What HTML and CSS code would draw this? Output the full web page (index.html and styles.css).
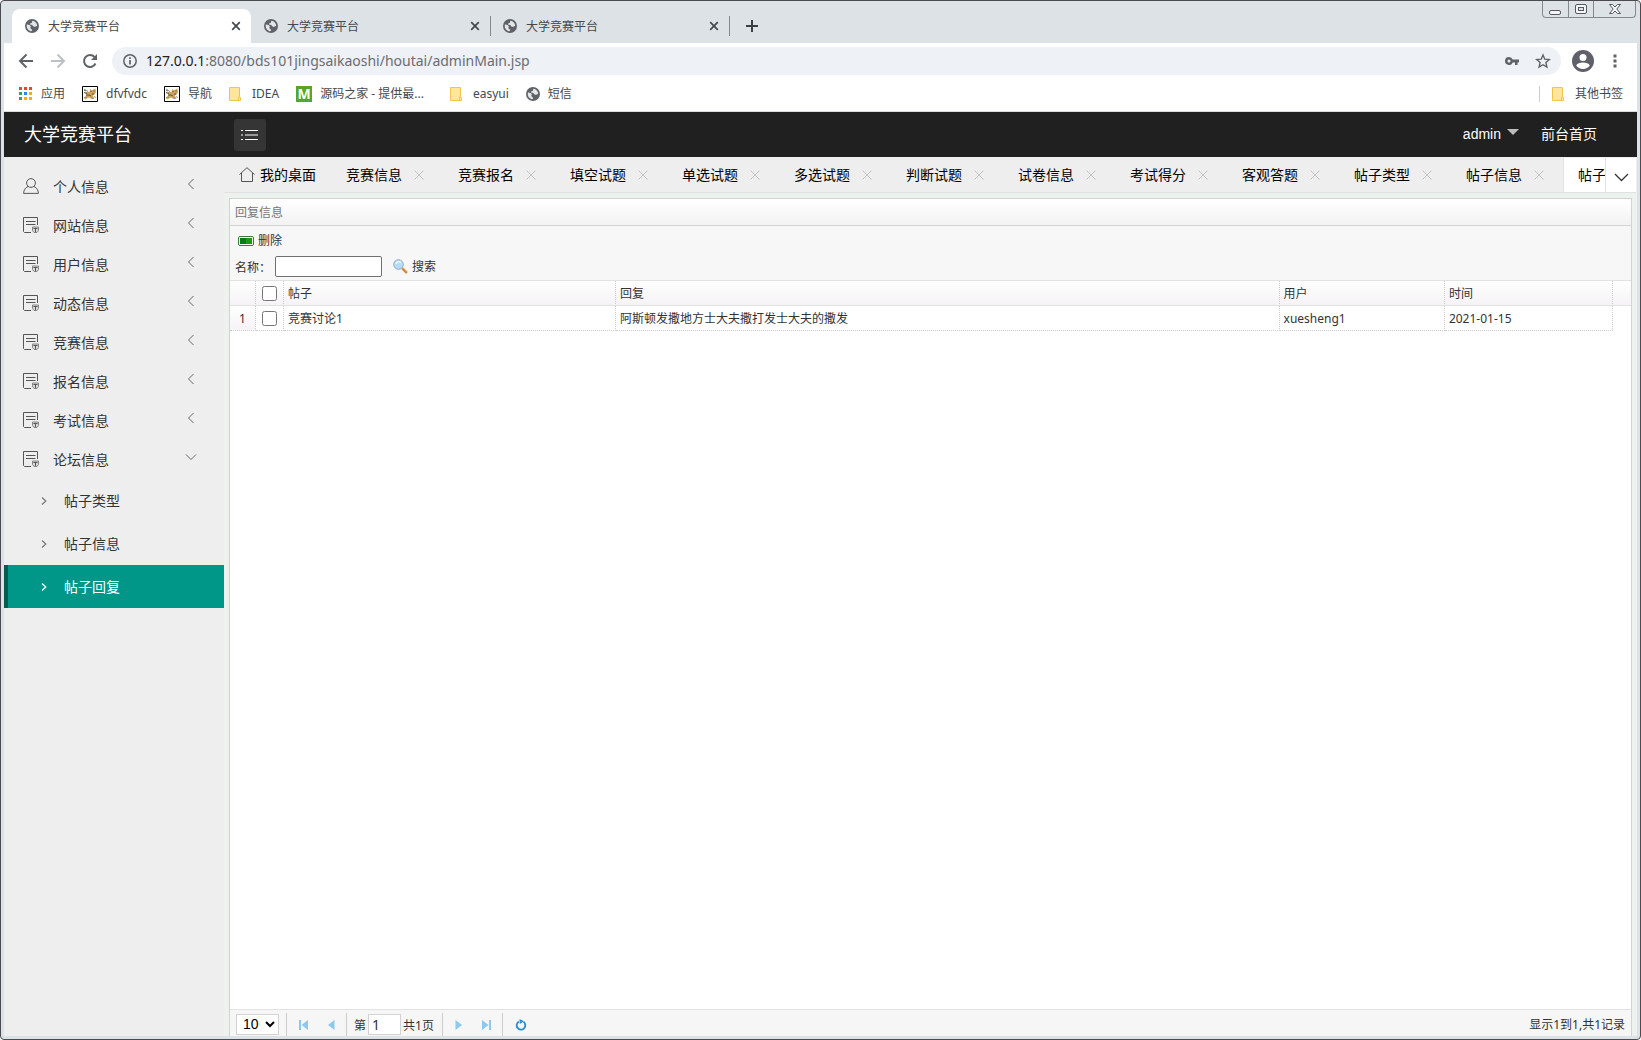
FILE: index.html
```html
<!DOCTYPE html>
<html lang="zh-CN">
<head>
<meta charset="utf-8">
<title>大学竞赛平台</title>
<link rel="stylesheet" href="styles.css">
</head>
<body>
<svg class="sprite" aria-hidden="true">
  <symbol id="globe" viewBox="0 0 14 14"><circle cx="7" cy="7" r="7" fill="#5f6368"/><path d="M2 5.200C3.500 6 5 5.800 5.600 7c.4 1-.6 1.400 0 2.400.5.900 1.600.6 1.500 1.800-.1.800-.8.900-1.500 1C3.300 11.300 1.700 9.500 1.700 7zM7.300 1.700c-.6.900.3 1.300-.4 2-.6.700-1.800.4-1.900 1.300 0 .9 1.300.6 2.100.9 1 .4 1 1.600 2 1.900 1.200.3 1.500-.7 3.100-.8-.1-2.800-2-4.900-4.900-5.300z" fill="#e4e7ea"/></symbol>
  <symbol id="cross" viewBox="0 0 10 10"><path d="M1.200 1.200l7.600 7.600M8.800 1.200l-7.600 7.600" fill="none" stroke="currentColor" stroke-width="1.700"/></symbol>
  <symbol id="thin-cross" viewBox="0 0 10 10"><path d="M.5.500l9 9M9.500.500l-9 9" fill="none" stroke="currentColor"/></symbol>
  <symbol id="folder" viewBox="0 0 12 14"><path d="M.5.500h10v9l1 1v3H.5z" fill="#ffe69a" stroke="#efc64a"/><path d="M9.500 13.500v-3.500h1.500" fill="none" stroke="#efc64a"/></symbol>
  <symbol id="cat" viewBox="0 0 16 16"><path d="M.5.500h15v15H.5z" fill="#fff" stroke="#000"/><path d="M8 3l2 1.200L13.500 2.500 14 6l-1.200 2.500-2 1 1.700 3.500h-3L7 11.500 3 13.500 2 12l2.500-3L3 7l2-1.500 2.500.5z" fill="#cfa35a"/><path d="M2 4l2 1M2 6.500l3 1M4 9h3l2 1M8.500 5.500h1M11.500 5h1M10 8h2" fill="none" stroke="#5b5346"/><path d="M2 3l4 2.500M2 11.500h3M12 10.500l2 1M9 11l2 2" fill="none" stroke="#8f9a94"/></symbol>
  <symbol id="left" viewBox="0 0 8 12"><path d="M6.500 1L1.500 6l5 5" fill="none" stroke="currentColor"/></symbol>
  <symbol id="down" viewBox="0 0 12 8"><path d="M1 1.500l5 5 5-5" fill="none" stroke="currentColor"/></symbol>
  <symbol id="right" viewBox="0 0 6 8"><path d="M1 .5L4.800 4 1 7.500" fill="none" stroke="currentColor" stroke-width="1.200"/></symbol>
  <symbol id="book" viewBox="0 0 16 16"><path d="M8 15.500H1.500L.5 14.500V.500H14.500V8M3 4.500H12.500M3 7.500H12.500" fill="none" stroke="#555"/><path d="M9.500 10h6v3.500L14 15.500h-3L9.500 13.500z" fill="#d8d8d8" stroke="#858585"/><path d="M10.500 11.500h4M12.500 11v4" stroke="#555"/></symbol>
  <symbol id="user" viewBox="0 0 16 16"><circle cx="8" cy="5" r="4.400" fill="none" stroke="#555"/><path d="M5 8.500C2 10 .8 12 .6 15.400h14.800C15.200 12 14 10 11 8.500" fill="none" stroke="#555"/></symbol>
</svg>

<div class="window">
  <div class="tabstrip">
    <div class="btab active"><svg class="i14"><use href="#globe"/></svg><span>大学竞赛平台</span><button aria-label="关闭标签"><svg class="i10"><use href="#cross"/></svg></button></div>
    <div class="btab"><svg class="i14"><use href="#globe"/></svg><span>大学竞赛平台</span><button aria-label="关闭标签"><svg class="i10"><use href="#cross"/></svg></button></div>
    <div class="btab"><svg class="i14"><use href="#globe"/></svg><span>大学竞赛平台</span><button aria-label="关闭标签"><svg class="i10"><use href="#cross"/></svg></button></div>
    <button class="newtab" aria-label="新标签"><svg width="12" height="12" viewBox="0 0 12 12"><path d="M6 0v12M0 6h12" stroke="#3c4043" stroke-width="2"/></svg></button>
    <div class="winbtns">
      <button aria-label="最小化"><svg width="13" height="13" viewBox="0 0 13 13"><rect x=".5" y="7.500" width="11" height="4" rx="1.500" fill="#f4f5f6" stroke="#55585e"/></svg></button>
      <button aria-label="最大化"><svg width="13" height="11" viewBox="0 0 13 11"><rect x=".5" y=".5" width="11" height="9" rx="1.500" fill="#f4f5f6" stroke="#55585e"/><rect x="3.500" y="3.500" width="5" height="3" fill="#dee1e6" stroke="#55585e"/></svg></button>
      <button class="wide" aria-label="关闭"><svg width="12" height="10" viewBox="0 0 12 10"><path d="M.5.500H3.500L6 3 8.500.500h3L7.800 5l3.700 4.500h-3L6 7 3.500 9.500H.5L4.200 5z" fill="#f4f5f6" stroke="#55585e"/></svg></button>
    </div>
  </div>

  <div class="toolbar">
    <button aria-label="后退"><svg width="16" height="16" viewBox="0 0 16 16"><path d="M15 8H2M8.500 1.500L2 8l6.500 6.500" fill="none" stroke="#5f6368" stroke-width="2"/></svg></button>
    <button aria-label="前进"><svg width="16" height="16" viewBox="0 0 16 16"><path d="M1 8h13M7.500 1.500L14 8l-6.500 6.500" fill="none" stroke="#bdc1c6" stroke-width="2"/></svg></button>
    <button aria-label="重新加载"><svg width="16" height="16" viewBox="0 0 16 16"><path d="M13.500 10.500A6 6 0 1 1 12.500 4" fill="none" stroke="#5f6368" stroke-width="2"/><path d="M15 1v6H9z" fill="#5f6368"/></svg></button>
    <div class="address">
      <svg width="14" height="14" viewBox="0 0 14 14"><circle cx="7" cy="7" r="6.200" fill="none" stroke="#5f6368" stroke-width="1.500"/><path d="M7 6v4.500M7 3.300v1.600" stroke="#5f6368" stroke-width="1.700"/></svg>
      <p class="url"><b>127.0.0.1</b>:8080/bds101jingsaikaoshi/houtai/adminMain.jsp</p>
      <button aria-label="密码"><svg width="14" height="8" viewBox="0 0 14 8"><path fill-rule="evenodd" d="M4 0a4 4 0 0 1 3.700 2.500H14v3h-1.500V8H10V5.500H7.700A4 4 0 1 1 4 0zm0 2.500a1.500 1.500 0 1 0 0 3 1.500 1.500 0 0 0 0-3z" fill="#5f6368"/></svg></button>
      <button aria-label="收藏"><svg width="16" height="16" viewBox="0 0 16 16"><path d="M8 2l1.800 4.200 4.500.4-3.400 3 1 4.400L8 11.700 4.100 14l1-4.400-3.400-3 4.500-.4z" fill="none" stroke="#5f6368" stroke-width="1.400"/></svg></button>
    </div>
    <button aria-label="用户"><svg width="22" height="22" viewBox="0 0 22 22"><circle cx="11" cy="11" r="11" fill="#5f6069"/><circle cx="11" cy="7.500" r="3.500" fill="#fff"/><path d="M4.200 15.500c1-2.200 4-3 6.800-3s5.800.8 6.800 3c-1.500 2.200-4 3.500-6.800 3.500s-5.300-1.300-6.800-3.500z" fill="#fff"/></svg></button>
    <button class="kebab" aria-label="菜单"><svg width="4" height="14" viewBox="0 0 4 14"><path d="M.5.500h3v3h-3zM.5 5.500h3v3h-3zM.5 10.500h3v3h-3z" fill="#5f6368"/></svg></button>
  </div>

  <nav class="bookmarks">
    <a href="#"><svg width="14" height="14" viewBox="0 0 14 14"><path d="M0 0h3v3H0zM5 0h3v3H5zM10 0h3v3h-3z" fill="#ea4335"/><path d="M0 5h3v3H0zM0 10h3v3H0z" fill="#34a060"/><path d="M5 5h3v3H5z" fill="#2986f5"/><path d="M10 5h3v3h-3zM5 10h3v3H5zM10 10h3v3h-3z" fill="#f6ad0c"/></svg>应用</a>
    <a href="#"><svg class="i16"><use href="#cat"/></svg>dfvfvdc</a>
    <a href="#"><svg class="i16"><use href="#cat"/></svg>导航</a>
    <a href="#" class="dir"><svg class="fold"><use href="#folder"/></svg>IDEA</a>
    <a href="#"><i class="m">M</i>源码之家 - 提供最...</a>
    <a href="#" class="dir far"><svg class="fold"><use href="#folder"/></svg>easyui</a>
    <a href="#"><svg class="i14"><use href="#globe"/></svg>短信</a>
    <a href="#" class="dir other"><svg class="fold"><use href="#folder"/></svg>其他书签</a>
  </nav>

  <header class="header">
    <h1>大学竞赛平台</h1>
    <button class="burger" aria-label="折叠菜单"><svg width="18" height="12" viewBox="0 0 18 12"><path d="M4 1.500h13M4 6h13M4 10.500h13M0 1.500h2M0 6h2M0 10.500h2" stroke="#fff"/></svg></button>
    <a href="#" class="admin">admin <svg width="12" height="6" viewBox="0 0 12 6"><path d="M0 0h12L6 6z" fill="#bcbcbc"/></svg></a>
    <a href="#" class="front">前台首页</a>
  </header>

  <div class="app">
    <aside class="side">
      <a href="#" class="item"><svg class="i16"><use href="#user"/></svg>个人信息<svg class="chev"><use href="#left"/></svg></a>
      <a href="#" class="item"><svg class="i16"><use href="#book"/></svg>网站信息<svg class="chev"><use href="#left"/></svg></a>
      <a href="#" class="item"><svg class="i16"><use href="#book"/></svg>用户信息<svg class="chev"><use href="#left"/></svg></a>
      <a href="#" class="item"><svg class="i16"><use href="#book"/></svg>动态信息<svg class="chev"><use href="#left"/></svg></a>
      <a href="#" class="item"><svg class="i16"><use href="#book"/></svg>竞赛信息<svg class="chev"><use href="#left"/></svg></a>
      <a href="#" class="item"><svg class="i16"><use href="#book"/></svg>报名信息<svg class="chev"><use href="#left"/></svg></a>
      <a href="#" class="item"><svg class="i16"><use href="#book"/></svg>考试信息<svg class="chev"><use href="#left"/></svg></a>
      <a href="#" class="item"><svg class="i16"><use href="#book"/></svg>论坛信息<svg class="chev"><use href="#down"/></svg></a>
      <a href="#" class="sub"><svg><use href="#right"/></svg>帖子类型</a>
      <a href="#" class="sub"><svg><use href="#right"/></svg>帖子信息</a>
      <a href="#" class="sub current"><svg><use href="#right"/></svg>帖子回复</a>
    </aside>

    <main class="main">
      <div class="tabs">
        <div class="tablist">
          <a href="#" class="tab home"><svg width="16" height="15" viewBox="0 0 16 15"><path d="M.5 7.500L8 .7l7.500 6.800M2.500 6v8.500h11V6" fill="none" stroke="#555"/></svg>我的桌面</a>
          <a href="#" class="tab">竞赛信息<svg class="i10"><use href="#thin-cross"/></svg></a>
          <a href="#" class="tab">竞赛报名<svg class="i10"><use href="#thin-cross"/></svg></a>
          <a href="#" class="tab">填空试题<svg class="i10"><use href="#thin-cross"/></svg></a>
          <a href="#" class="tab">单选试题<svg class="i10"><use href="#thin-cross"/></svg></a>
          <a href="#" class="tab">多选试题<svg class="i10"><use href="#thin-cross"/></svg></a>
          <a href="#" class="tab">判断试题<svg class="i10"><use href="#thin-cross"/></svg></a>
          <a href="#" class="tab">试卷信息<svg class="i10"><use href="#thin-cross"/></svg></a>
          <a href="#" class="tab">考试得分<svg class="i10"><use href="#thin-cross"/></svg></a>
          <a href="#" class="tab">客观答题<svg class="i10"><use href="#thin-cross"/></svg></a>
          <a href="#" class="tab">帖子类型<svg class="i10"><use href="#thin-cross"/></svg></a>
          <a href="#" class="tab">帖子信息<svg class="i10"><use href="#thin-cross"/></svg></a>
          <a href="#" class="tab open">帖子</a>
        </div>
        <button class="more" aria-label="更多"><svg width="15" height="9" viewBox="0 0 15 9"><path d="M1 1l6.500 6.500L14 1" fill="none" stroke="#333" stroke-width="1.300"/></svg></button>
      </div>

      <section class="panel">
        <h2>回复信息</h2>
        <div class="tools">
          <button class="tool"><svg width="16" height="10" viewBox="0 0 16 10"><rect x=".5" y=".5" width="15" height="9" rx="1.500" fill="#fff" stroke="#3c7a3c"/><path d="M2 2h12v6H2z" fill="#1a9a1a"/><path d="M2 2h6v6H2z" fill="#0a7a12"/></svg>删除</button>
          <div class="query">
            <label for="name">名称：</label><input id="name" type="text">
            <button class="tool"><svg width="15" height="15" viewBox="0 0 15 15"><path d="M9 9l5 5" stroke="#e0a050" stroke-width="2.600"/><path d="M9.500 10l4 4" stroke="#a86a28" stroke-width=".8"/><circle cx="5.500" cy="5.500" r="4.800" fill="#b5ddfb" stroke="#9aa9c4"/><path d="M3 5a3 3 0 0 1 5-1.500" fill="none" stroke="#eef8ff" stroke-width="1.500"/></svg><span>搜索</span></button>
          </div>
        </div>
        <table>
          <colgroup><col class="c-num"><col class="c-check"><col class="c-post"><col><col class="c-user"><col class="c-time"><col class="c-gutter"></colgroup>
          <thead><tr><th></th><th><input type="checkbox" aria-label="全选"></th><th>帖子</th><th>回复</th><th>用户</th><th>时间</th><th></th></tr></thead>
          <tbody><tr><td class="num">1</td><td><input type="checkbox" aria-label="选择第1行"></td><td>竞赛讨论1</td><td>阿斯顿发撒地方士大夫撒打发士大夫的撒发</td><td>xuesheng1</td><td>2021-01-15</td><td></td></tr></tbody>
        </table>
        <footer class="pager">
          <div class="group"><select aria-label="每页条数"><option>10</option></select></div>
          <div class="group">
            <button aria-label="首页"><svg width="9" height="10" viewBox="0 0 9 10"><path d="M0 0h2v10H0zM9 0v10L2.500 5z" fill="#8cc8f0"/></svg></button>
            <button aria-label="上一页"><svg width="7" height="10" viewBox="0 0 7 10"><path d="M6.500 0v10L0 5z" fill="#8cc8f0"/></svg></button>
          </div>
          <div class="group page"><label for="page">第</label><input id="page" type="text" value="1"><span>共1页</span></div>
          <div class="group">
            <button aria-label="下一页"><svg width="7" height="10" viewBox="0 0 7 10"><path d="M.5 0v10L7 5z" fill="#8cc8f0"/></svg></button>
            <button aria-label="末页"><svg width="9" height="10" viewBox="0 0 9 10"><path d="M7 0h2v10H7zM0 0v10L6.500 5z" fill="#8cc8f0"/></svg></button>
          </div>
          <div class="group refresh"><button aria-label="刷新"><svg width="12" height="12" viewBox="0 0 12 12"><path d="M8.500 2.800A4.300 4.300 0 1 1 4 2.500" fill="none" stroke="#2f8fd0" stroke-width="1.900"/><path d="M4.500 0L9 2.300 4.800 5z" fill="#2f8fd0"/></svg></button></div>
          <p>显示1到1,共1记录</p>
        </footer>
      </section>
    </main>
  </div>
</div>
</body>
</html>
```
FILE: styles.css
```css
* { box-sizing: border-box; }
body, h1, h2, p { margin: 0; font-weight: normal; }
body { font: 12px/16px "Noto Sans", "Noto Sans CJK SC", sans-serif; color: #333; }
a { color: inherit; text-decoration: none; }
button { border: 0; background: none; padding: 0; margin: 0; font: inherit; color: inherit; display: flex; align-items: center; justify-content: center; }
svg { flex: none; display: block; }
.sprite { position: absolute; width: 0; height: 0; }
.i10 { width: 10px; height: 10px; }
.i14 { width: 14px; height: 14px; }
.i16 { width: 16px; height: 16px; }

.window { min-height: 100vh; display: flex; flex-direction: column; border: 1px solid #4b4a50; border-radius: 4px; background: #dde2e6; padding: 0 3px 3px; }

/* browser frame */
.tabstrip { display: flex; height: 42px; padding: 8px 0 0 8px; }
.btab { width: 239px; height: 34px; display: flex; align-items: center; gap: 9px; padding: 0 10px 0 13px; color: #45484d; }
.btab span { flex: 1; padding-top: 2px; }
.btab + .btab:not(:nth-child(2)) { background: linear-gradient(#85888d, #85888d) left center / 1px 20px no-repeat; }
.btab.active { background: #fff; border-radius: 8px 8px 0 0; }
.newtab { width: 46px; height: 34px; background: linear-gradient(#85888d, #85888d) left center / 1px 20px no-repeat; }
.winbtns { display: flex; align-self: flex-start; height: 17px; margin: -8px 1px 0 auto; border: 1px solid #85888f; border-top: 0; border-radius: 0 0 4px 4px; }
.winbtns button { width: 25px; }
.winbtns button + button { border-left: 1px solid #85888f; }
.winbtns .wide { width: 42px; }
.toolbar { display: flex; align-items: center; height: 36px; background: #fff; padding: 0 20px 0 14px; gap: 16px; }
.address { flex: 1; display: flex; align-items: center; height: 28px; border-radius: 14px; background: #eef1f6; padding: 0 10px 0 11px; margin: 0 -5px 0 -2px; gap: 16px; }
.url { flex: 1; margin-left: -7px; font-size: 14px; line-height: 20px; color: #6a6d72; }
.url b { font-weight: normal; color: #222; }
.kebab { margin-left: 3px; }
.bookmarks { display: flex; align-items: center; height: 33px; padding: 0 14px 2px 15px; gap: 17px; background: #fff; border-bottom: 1px solid #dadce0; color: #45484d; }
.bookmarks a { display: flex; align-items: center; gap: 8px; }
.bookmarks .dir { gap: 11px; }
.bookmarks .far { margin-left: 9px; }
.bookmarks .other { margin-left: auto; border-left: 1px solid #ccc; padding-left: 12px; }
.fold { width: 12px; height: 14px; }
.m { width: 16px; height: 16px; background: #54a823; color: #fff; font: bold 14px/16px "Open Sans", sans-serif; text-align: center; }

/* application */
.header { display: flex; align-items: center; height: 45px; background: #202020; color: #fff; padding: 0 40px 0 20px; }
.header h1 { width: 210px; font-size: 18px; line-height: 24px; padding-bottom: 2px; }
.burger { width: 32px; height: 32px; background: #353535; border-radius: 3px; }
.header a { font: 14px/20px "Liberation Sans", "Noto Sans CJK SC", sans-serif; padding-bottom: 2px; }
.admin { display: flex; align-items: center; gap: 6px; margin-left: auto; }
.admin svg { margin-bottom: 4px; }
.header .front { margin-left: 22px; }
.app { flex: 1; display: flex; background: #eef2ee; }
.side { width: 220px; background: #eee; padding-top: 10px; font-size: 14px; line-height: 20px; }
.item { display: flex; align-items: center; height: 39px; padding: 0 27px 0 19px; }
.item .i16 { margin: 0 14px 2px 0; }
.chev { width: 12px; height: 12px; margin: 0 0 6px auto; color: #666; }
.sub { display: flex; align-items: center; height: 43px; padding-left: 33px; border-left: 4px solid transparent; gap: 17px; }
.sub svg { width: 6px; height: 8px; color: #777; }
.current { background: #009688; border-color: #005d50; color: #fff; }
.current svg { color: #fff; }

.main { flex: 1; min-width: 0; display: flex; flex-direction: column; }
.tabs { display: flex; height: 36px; background: #eee; border-bottom: 1px solid #e2e2e2; margin-right: 1px; padding-top: 1px; }
.tablist { flex: 1; min-width: 0; display: flex; overflow: hidden; }
.tab { flex: none; display: flex; align-items: center; width: 112px; padding-left: 15px; gap: 12px; font: 14px/20px "Liberation Sans", "Noto Sans CJK SC", sans-serif; color: #000; }
.tab svg { color: #c2c2c8; }
.home { width: 107px; gap: 5px; }
.home svg { margin-bottom: 2px; }
.open { background: #fff; border-left: 1px solid #e2e2e2; padding-left: 14px; }
.more { width: 31px; background: #fff; border-left: 1px solid #e2e2e2; padding-top: 4px; }

.panel { flex: 1; display: flex; flex-direction: column; margin: 5px 5px 0; border: 1px solid #d3d3d3; border-bottom: 0; background: #fff; }
.panel h2 { height: 27px; font-size: 12px; line-height: 28px; padding-left: 5px; color: #777; background: linear-gradient(#fff, #f3f2f3); border-bottom: 1px solid #d3d3d3; }
.tools { height: 55px; background: #f7f7f7; border-bottom: 1px solid #e2e2e2; padding: 3px 5px; }
.tool { gap: 4px; height: 24px; }
.tool span { padding-top: 2px; }
.tools > .tool { margin-left: 3px; }
.query { display: flex; align-items: center; height: 26px; }
.query label { width: 40px; white-space: nowrap; padding-top: 2px; font-family: "Noto Sans CJK TC", sans-serif; }
.query input { width: 107px; height: 21px; border: 1px solid #707070; border-radius: 2px; background: #fff; margin-right: 11px; }
table { width: 100%; table-layout: fixed; border-collapse: separate; border-spacing: 0; }
.c-num { width: 26px; } .c-check { width: 28px; } .c-post { width: 23.7%; } .c-user { width: 11.8%; } .c-time { width: 12%; } .c-gutter { width: 18px; }
th, td { height: 25px; padding: 2px 4px 0; text-align: left; font-weight: normal; border: 0 dotted #ccc; border-right-width: 1px; }
th { background: linear-gradient(#fff, #f5f3f5); border-bottom: 1px solid #e2e2e2; }
td { border-bottom-width: 1px; }
th:last-child { border-right: 0; }
td:last-child { border: 0; }
.num { text-align: center; padding: 2px 0 0; background: linear-gradient(#fff, #f5f3f5); }
th:nth-child(2), td:nth-child(2) { padding-top: 0; }
th input, td input { display: block; width: 15px; height: 15px; margin: 0 0 0 2px; }
.pager { display: flex; align-items: center; height: 27px; margin-top: auto; background: #f6f6f6; border-top: 1px solid #e2e2e2; padding: 0 6px; }
.group { display: flex; align-items: center; height: 23px; align-self: flex-end; padding: 0 11px 0 12px; gap: 20px; }
.group + .group { border-left: 1px solid #ccc; }
.group:first-child { padding: 0 7px 0 0; }
.group select { width: 43px; height: 21px; border: 1px solid #d3d3d3; background: #fff; padding: 0 0 2px 2px; font: 14px/18px "Liberation Sans", sans-serif; color: #000; }
.group.page { gap: 2px; padding: 0 8px 0 7px; }
.page label, .page span { padding-top: 2px; }
.page input { width: 33px; height: 21px; border: 1px solid #d3d3d3; padding: 0 3px 1px; font: 14px/18px "Noto Sans", sans-serif; color: #333; }
.pager p { margin-left: auto; padding-top: 4px; }
```
